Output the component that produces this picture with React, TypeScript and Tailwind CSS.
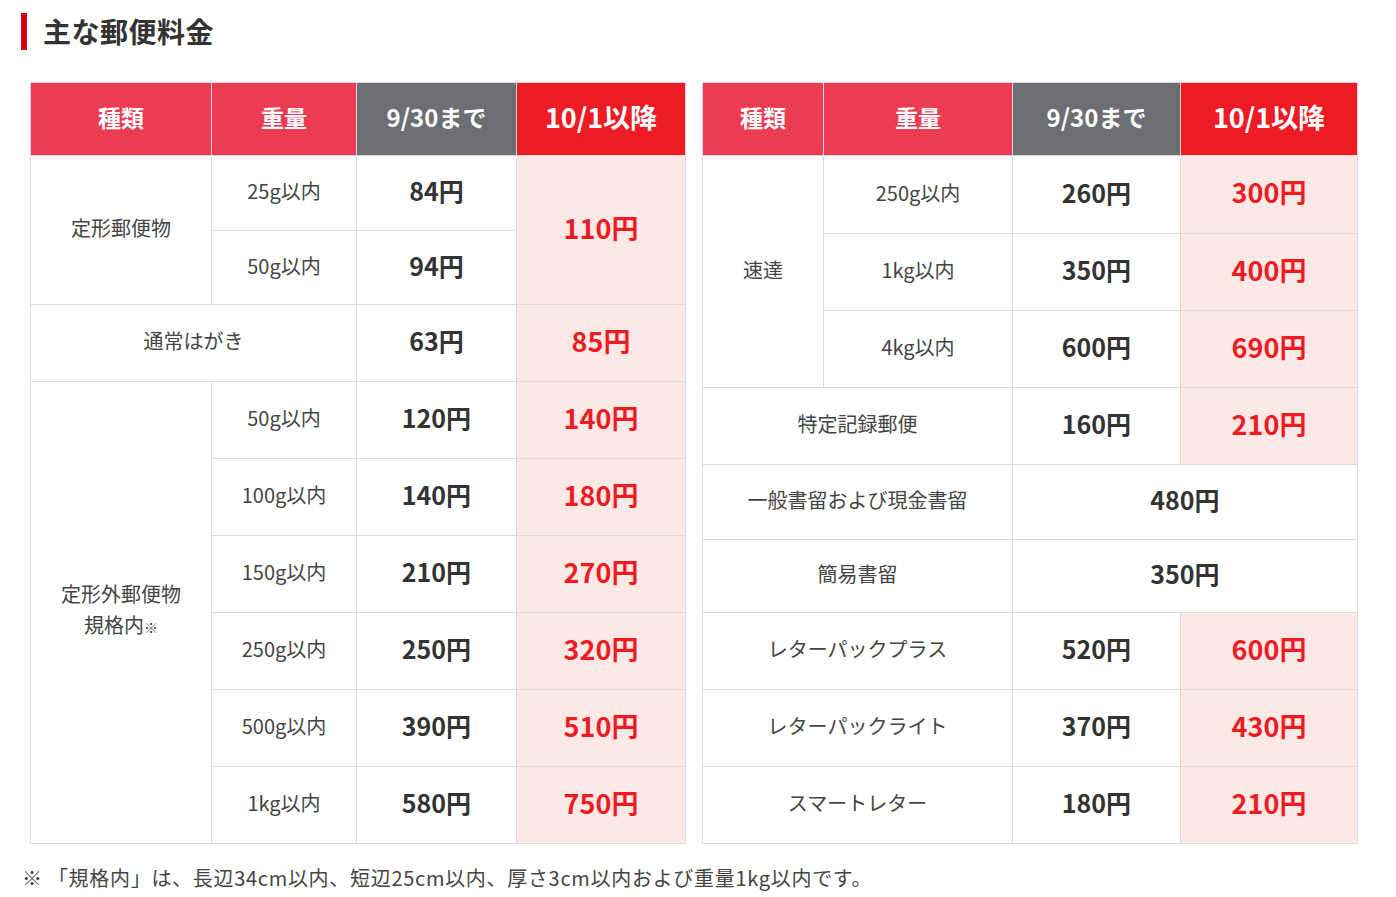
const FONT = "font-['Noto_Sans_CJK_JP','Noto_Sans',sans-serif]";

const th = "border border-[#d9d9d9] text-white font-bold text-[23px] text-center align-middle pb-[4px]";
const label = "border border-[#dcdcdc] text-[20px] text-[#444] text-center align-middle pb-[4px]";
const oldPrice = "border border-[#dcdcdc] text-[25px] font-bold text-[#333] text-center align-middle pb-[4px]";
const newPrice = "border border-[#dcdcdc] bg-[#fce8e4] text-[27px] font-bold text-[#ed1c24] text-center align-middle pb-[4px]";

const TEIKEIGAI = [
  { w: "50g以内", old: "120円", next: "140円" },
  { w: "100g以内", old: "140円", next: "180円" },
  { w: "150g以内", old: "210円", next: "270円" },
  { w: "250g以内", old: "250円", next: "320円" },
  { w: "500g以内", old: "390円", next: "510円" },
  { w: "1kg以内", old: "580円", next: "750円" },
];

const SOKUTATSU = [
  { w: "250g以内", old: "260円", next: "300円", h: "h-[78px]" },
  { w: "1kg以内", old: "350円", next: "400円", h: "h-[77px]" },
  { w: "4kg以内", old: "600円", next: "690円", h: "h-[77px]" },
];

const OTHERS = [
  { name: "レターパックプラス", old: "520円", next: "600円" },
  { name: "レターパックライト", old: "370円", next: "430円" },
  { name: "スマートレター", old: "180円", next: "210円" },
];

function HeadRow() {
  return (
    <tr className="h-[73px]">
      <th className={`${th} bg-[#ec3c52]`}>種類</th>
      <th className={`${th} bg-[#ec3c52]`}>重量</th>
      <th className={`${th} bg-[#6d6e71] text-[24px]`}>9/30まで</th>
      <th className={`${th} bg-[#ed1c24] text-[27px]`}>10/1以降</th>
    </tr>
  );
}

function LeftTable() {
  return (
    <table className="w-[655px] table-fixed border-collapse">
      <colgroup>
        <col className="w-[181px]" />
        <col className="w-[145px]" />
        <col className="w-[160px]" />
        <col className="w-[169px]" />
      </colgroup>
      <thead>
        <HeadRow />
      </thead>
      <tbody>
        <tr className="h-[75px]">
          <td rowSpan={2} className={label}>定形郵便物</td>
          <td className={label}>25g以内</td>
          <td className={oldPrice}>84円</td>
          <td rowSpan={2} className={newPrice}>110円</td>
        </tr>
        <tr className="h-[74px]">
          <td className={label}>50g以内</td>
          <td className={oldPrice}>94円</td>
        </tr>
        <tr className="h-[77px]">
          <td colSpan={2} className={label}>通常はがき</td>
          <td className={oldPrice}>63円</td>
          <td className={newPrice}>85円</td>
        </tr>
        {TEIKEIGAI.map((r, i) => (
          <tr key={r.w} className="h-[77px]">
            {i === 0 && (
              <td rowSpan={TEIKEIGAI.length} className={`${label} leading-[31px]`}>
                定形外郵便物
                <br />
                規格内<span className="text-[14px]">※</span>
              </td>
            )}
            <td className={label}>{r.w}</td>
            <td className={oldPrice}>{r.old}</td>
            <td className={newPrice}>{r.next}</td>
          </tr>
        ))}
      </tbody>
    </table>
  );
}

function RightTable() {
  return (
    <table className="w-[655px] table-fixed border-collapse">
      <colgroup>
        <col className="w-[121px]" />
        <col className="w-[189px]" />
        <col className="w-[168px]" />
        <col className="w-[177px]" />
      </colgroup>
      <thead>
        <HeadRow />
      </thead>
      <tbody>
        {SOKUTATSU.map((r, i) => (
          <tr key={r.w} className={r.h}>
            {i === 0 && (
              <td rowSpan={SOKUTATSU.length} className={label}>速達</td>
            )}
            <td className={label}>{r.w}</td>
            <td className={oldPrice}>{r.old}</td>
            <td className={newPrice}>{r.next}</td>
          </tr>
        ))}
        <tr className="h-[77px]">
          <td colSpan={2} className={label}>特定記録郵便</td>
          <td className={oldPrice}>160円</td>
          <td className={newPrice}>210円</td>
        </tr>
        <tr className="h-[75px]">
          <td colSpan={2} className={label}>一般書留および現金書留</td>
          <td colSpan={2} className={oldPrice}>480円</td>
        </tr>
        <tr className="h-[73px]">
          <td colSpan={2} className={label}>簡易書留</td>
          <td colSpan={2} className={oldPrice}>350円</td>
        </tr>
        {OTHERS.map((r) => (
          <tr key={r.name} className="h-[77px]">
            <td colSpan={2} className={label}>{r.name}</td>
            <td className={oldPrice}>{r.old}</td>
            <td className={newPrice}>{r.next}</td>
          </tr>
        ))}
      </tbody>
    </table>
  );
}

export default function App() {
  return (
    <div className={`${FONT} w-[1396px] h-[897px] bg-white text-[#333] overflow-hidden`}>
      {/* heading */}
      <div className="flex items-center gap-[16px] pl-[21px] pt-[13px]">
        <span className="w-[6px] h-[37px] bg-[#d7000f]" />
        <h2 className="text-[28px] font-bold leading-none text-[#333] tracking-[0.5px] pb-[2px]">主な郵便料金</h2>
      </div>

      <div className="flex gap-[16px] pl-[30px] mt-[32px]">
        <LeftTable />
        <RightTable />
      </div>

      <p className="pl-[22px] mt-[21px] text-[20px] text-[#444] leading-[26px] tracking-[0.7px]">
        ※ 「規格内」は、長辺34cm以内、短辺25cm以内、厚さ3cm以内および重量1kg以内です。
      </p>
    </div>
  );
}
